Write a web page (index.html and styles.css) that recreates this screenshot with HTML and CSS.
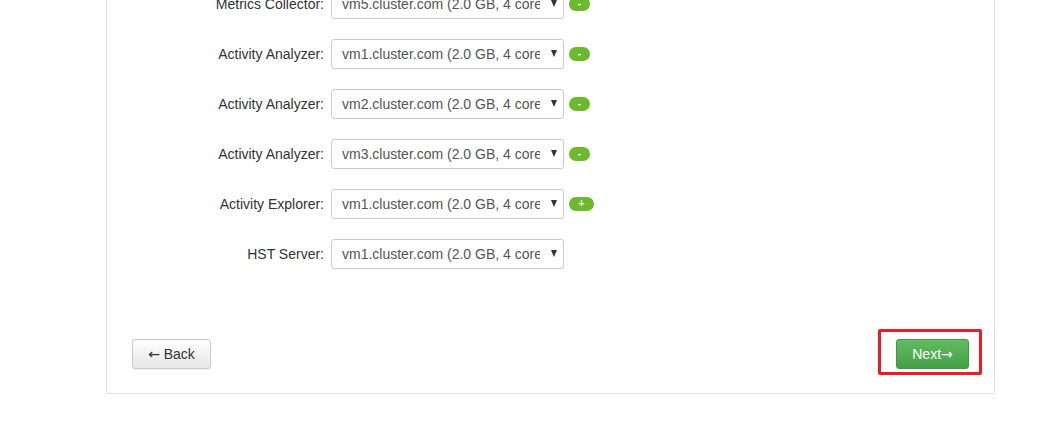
FILE: index.html
```html
<!DOCTYPE html>
<html>
<head>
<meta charset="utf-8">
<link rel="stylesheet" href="styles.css">
</head>
<body>
<div class="panel">
  <div class="rows">
    <div class="row">
      <label class="lbl">Metrics Collector:</label>
      <div class="select"><span class="sel-text">vm5.cluster.com (2.0 GB, 4 cores)</span><span class="caret"></span></div>
      <span class="badge">-</span>
    </div>
    <div class="row">
      <label class="lbl">Activity Analyzer:</label>
      <div class="select"><span class="sel-text">vm1.cluster.com (2.0 GB, 4 cores)</span><span class="caret"></span></div>
      <span class="badge">-</span>
    </div>
    <div class="row">
      <label class="lbl">Activity Analyzer:</label>
      <div class="select"><span class="sel-text">vm2.cluster.com (2.0 GB, 4 cores)</span><span class="caret"></span></div>
      <span class="badge">-</span>
    </div>
    <div class="row">
      <label class="lbl">Activity Analyzer:</label>
      <div class="select"><span class="sel-text">vm3.cluster.com (2.0 GB, 4 cores)</span><span class="caret"></span></div>
      <span class="badge">-</span>
    </div>
    <div class="row">
      <label class="lbl">Activity Explorer:</label>
      <div class="select"><span class="sel-text">vm1.cluster.com (2.0 GB, 4 cores)</span><span class="caret"></span></div>
      <span class="badge badge-plus">+</span>
    </div>
    <div class="row">
      <label class="lbl">HST Server:</label>
      <div class="select"><span class="sel-text">vm1.cluster.com (2.0 GB, 4 cores)</span><span class="caret"></span></div>
    </div>
  </div>
  <div class="actions">
    <button class="btn btn-back"><span class="arrow">&larr;</span> Back</button>
    <button class="btn btn-next">Next<span class="arrow">&rarr;</span><span class="highlight"></span></button>
  </div>
</div>
</body>
</html>
```

FILE: styles.css
```css
html, body {
  margin: 0;
  padding: 0;
  background: #fff;
}
body {
  font-family: "Liberation Sans", Arial, Helvetica, sans-serif;
  font-size: 14px;
  color: #333;
  overflow: hidden;
}
.panel {
  box-sizing: border-box;
  width: 889px;
  margin-left: 106px;
  margin-top: -62px;
  border: 1px solid #e3e3e3;
  border-top: none;
  padding: 0 25px 24px 25px;
}
.rows {
  display: flex;
  flex-direction: column;
  gap: 20px;
  padding-top: 51px;
}
.row {
  display: flex;
  align-items: center;
  height: 30px;
}
.lbl {
  width: 192px;
  text-align: right;
  padding-right: 7px;
  color: #333;
  font-size: 14px;
}
.select {
  box-sizing: border-box;
  width: 233px;
  height: 30px;
  border: 1px solid #ccc;
  border-radius: 3px;
  display: flex;
  align-items: center;
  padding-left: 10px;
  padding-right: 6px;
  color: #555;
  background: #fff;
}
.sel-text {
  flex: none;
  overflow: hidden;
  white-space: nowrap;
  font-size: 14px;
  width: 198px;
  color: #555;
}
.caret {
  width: 0;
  height: 0;
  border-left: 3.5px solid transparent;
  border-right: 3.5px solid transparent;
  border-top: 7px solid #333;
  margin-left: auto;
  margin-top: -2px;
}
.badge {
  margin-left: 5px;
  width: 21px;
  height: 14px;
  border-radius: 7px;
  background: #6cb92c;
  color: #fff;
  font-size: 10px;
  font-weight: bold;
  line-height: 14px;
  text-align: center;
}
.badge-plus {
  width: 25px;
}
.actions {
  display: flex;
  justify-content: space-between;
  align-items: center;
  margin-top: 70px;
}
.btn {
  position: relative;
  box-sizing: border-box;
  height: 30px;
  font-family: "Liberation Sans", Arial, sans-serif;
  font-size: 14px;
  border-radius: 3px;
  padding: 0;
  cursor: pointer;
}
.arrow {
  font-family: "DejaVu Sans", sans-serif;
  font-size: 14px;
}
.btn-back {
  width: 79px;
  color: #333;
  border: 1px solid #ccc;
  background: linear-gradient(#fff, #e6e6e6);
  box-shadow: inset 0 1px 0 rgba(255,255,255,.15), 0 1px 1px rgba(0,0,0,.075);
}
.btn-next {
  width: 73px;
  color: #fff;
  border: 1px solid #3f9a3f;
  background: linear-gradient(#62bd62, #45a045);
}
.highlight {
  position: absolute;
  left: -19px;
  top: -11px;
  right: -14px;
  bottom: -7px;
  border: 3px solid #ea1c24;
  border-radius: 2px;
  pointer-events: none;
}
```
